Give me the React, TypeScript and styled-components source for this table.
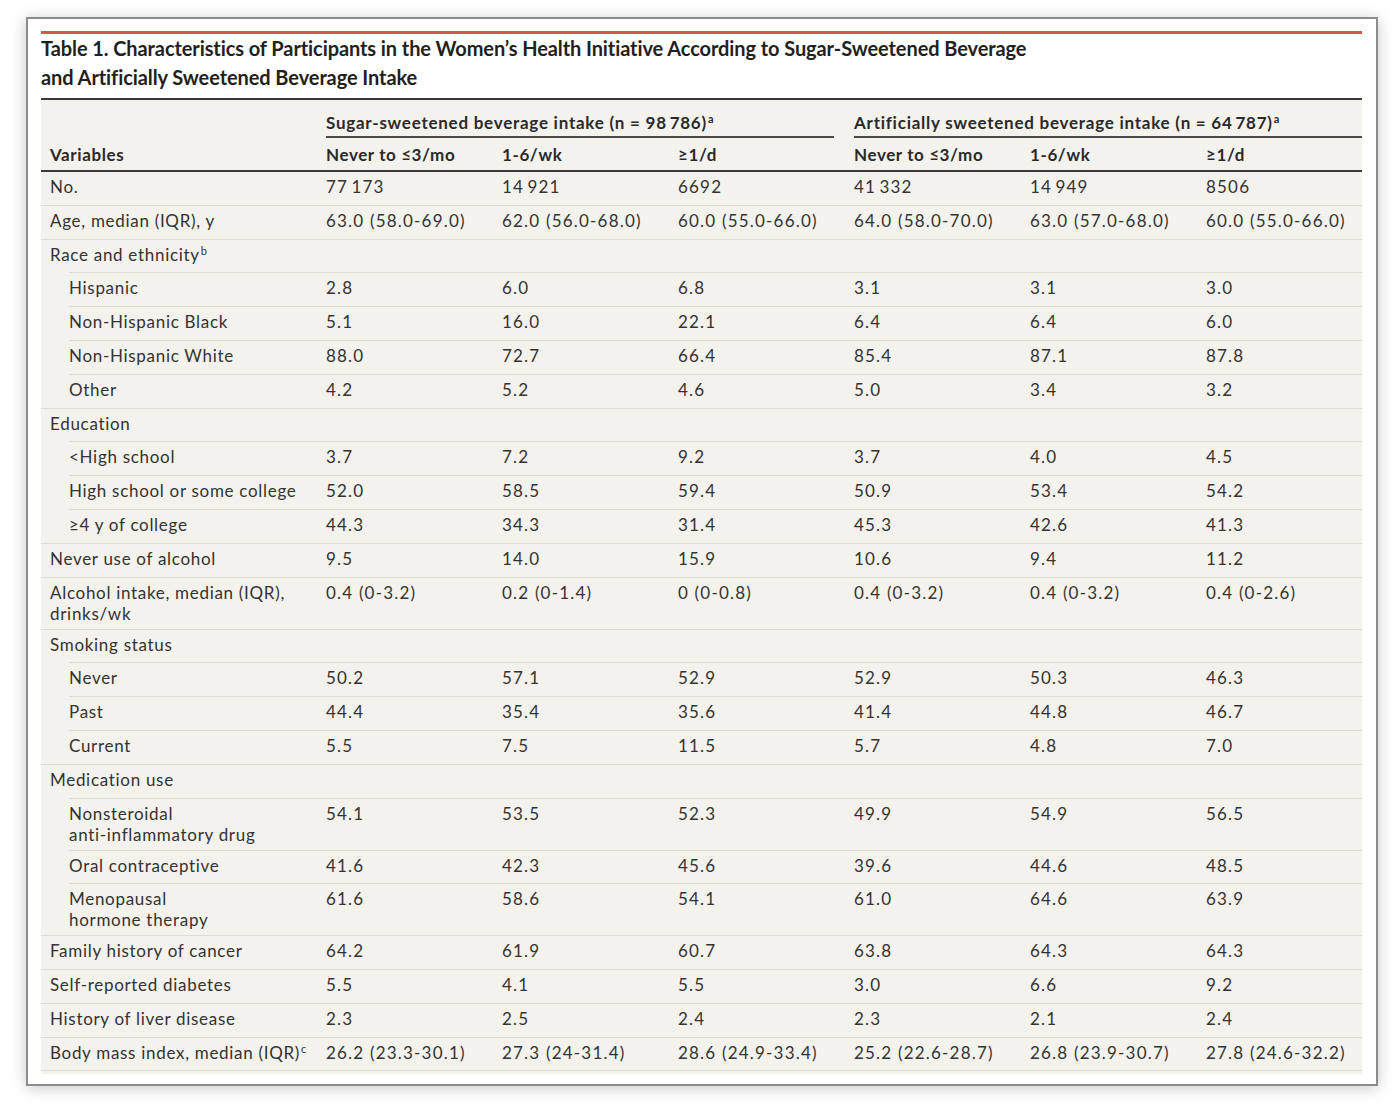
import React from "react";
import styled, { createGlobalStyle } from "styled-components";

const Global = createGlobalStyle`
  html, body { margin: 0; padding: 0; background: #ffffff; }
  body { font-family: Lato, "Noto Sans", sans-serif; color: #333; }
`;

const Page = styled.div`
  padding: 17px 0 20px 26px;
`;

const Card = styled.div`
  width: 1352px;
  box-sizing: border-box;
  border: 2px solid #8c8c8c;
  background: #fff;
  box-shadow: 0 2px 14px rgba(0, 0, 0, 0.22);
  padding: 12px 14px 10px 13px;
`;

const RedBar = styled.div`
  height: 3px;
  background: #d9534f;
`;

const Title = styled.h1`
  margin: 0 0 6px 0;
  font-family: Lato, "Noto Sans", sans-serif;
  font-weight: 700;
  font-size: 20px;
  line-height: 29px;
  color: #231f20;
  letter-spacing: -0.09px;
`;

const Table = styled.div`
  background: #f3f2ed;
  border-top: 2px solid #3a3a3a;
  padding-bottom: 3px;
`;

const COLS = "276px 176px 176px 176px 176px 176px 165px";

const GroupRow = styled.div`
  display: grid;
  grid-template-columns: ${COLS};
  padding-top: 12px;
`;

const GroupCell = styled.div<{ $start: number; $right: number }>`
  grid-column: ${(p) => p.$start} / span 3;
  padding: 0 ${(p) => p.$right}px 0 9px;
`;

const GroupLabel = styled.div`
  font-size: 17px;
  line-height: 21px;
  font-weight: 700;
  letter-spacing: 0.75px;
  color: #2a2a2a;
  padding-bottom: 3px;
  border-bottom: 2px solid #4a4a4a;
  white-space: nowrap;
`;

const HeadRow = styled.div`
  display: grid;
  grid-template-columns: ${COLS};
  padding: 6px 0 5px;
  border-bottom: 2px solid #3a3a3a;
`;

const HeadCell = styled.div`
  padding-left: 9px;
  font-size: 17px;
  line-height: 21px;
  font-weight: 700;
  letter-spacing: 0.6px;
  color: #2a2a2a;
  white-space: nowrap;
`;

const Row = styled.div<{ $sub?: boolean; $first?: boolean; $last?: boolean }>`
  display: grid;
  grid-template-columns: ${(p) => (p.$sub ? "248px 176px 176px 176px 176px 176px 165px" : COLS)};
  margin-left: ${(p) => (p.$sub ? 28 : 0)}px;
  border-top: ${(p) => (p.$first ? "none" : "1px solid #dcdbd4")};
  border-bottom: ${(p) => (p.$last ? "1px solid #dcdbd4" : "none")};
  box-sizing: border-box;
  min-height: ${(p) => (p.$first ? 32.8 : 33.8)}px;
  padding: 4px 0 5px;
`;

const Label = styled.div<{ $sub?: boolean }>`
  padding-left: ${(p) => (p.$sub ? 0 : 9)}px;
  font-size: 17px;
  line-height: 21px;
  letter-spacing: 0.7px;
  color: #333;
  white-space: nowrap;
`;

const Value = styled.div`
  padding-left: 9px;
  font-size: 17px;
  line-height: 21px;
  letter-spacing: 1.2px;
  color: #333;
  white-space: nowrap;
`;

const Sup = styled.sup`
  font-size: 11px;
  line-height: 0;
  vertical-align: 6px;
  margin-left: 1px;
  letter-spacing: 0;
`;

type RowData = {
  label: React.ReactNode;
  values?: string[];
  sub?: boolean;
};

const T = "\u2009";

const rows: RowData[] = [
  { label: "No.", values: [`77${T}173`, `14${T}921`, "6692", `41${T}332`, `14${T}949`, "8506"] },
  {
    label: "Age, median (IQR), y",
    values: ["63.0 (58.0-69.0)", "62.0 (56.0-68.0)", "60.0 (55.0-66.0)", "64.0 (58.0-70.0)", "63.0 (57.0-68.0)", "60.0 (55.0-66.0)"],
  },
  { label: <>Race and ethnicity<Sup>b</Sup></> },
  { label: "Hispanic", sub: true, values: ["2.8", "6.0", "6.8", "3.1", "3.1", "3.0"] },
  { label: "Non-Hispanic Black", sub: true, values: ["5.1", "16.0", "22.1", "6.4", "6.4", "6.0"] },
  { label: "Non-Hispanic White", sub: true, values: ["88.0", "72.7", "66.4", "85.4", "87.1", "87.8"] },
  { label: "Other", sub: true, values: ["4.2", "5.2", "4.6", "5.0", "3.4", "3.2"] },
  { label: "Education" },
  { label: "<High school", sub: true, values: ["3.7", "7.2", "9.2", "3.7", "4.0", "4.5"] },
  { label: "High school or some college", sub: true, values: ["52.0", "58.5", "59.4", "50.9", "53.4", "54.2"] },
  { label: "≥4 y of college", sub: true, values: ["44.3", "34.3", "31.4", "45.3", "42.6", "41.3"] },
  { label: "Never use of alcohol", values: ["9.5", "14.0", "15.9", "10.6", "9.4", "11.2"] },
  {
    label: <>Alcohol intake, median (IQR),<br />drinks/wk</>,
    values: ["0.4 (0-3.2)", "0.2 (0-1.4)", "0 (0-0.8)", "0.4 (0-3.2)", "0.4 (0-3.2)", "0.4 (0-2.6)"],
  },
  { label: "Smoking status" },
  { label: "Never", sub: true, values: ["50.2", "57.1", "52.9", "52.9", "50.3", "46.3"] },
  { label: "Past", sub: true, values: ["44.4", "35.4", "35.6", "41.4", "44.8", "46.7"] },
  { label: "Current", sub: true, values: ["5.5", "7.5", "11.5", "5.7", "4.8", "7.0"] },
  { label: "Medication use" },
  {
    label: <>Nonsteroidal<br />anti-inflammatory drug</>,
    sub: true,
    values: ["54.1", "53.5", "52.3", "49.9", "54.9", "56.5"],
  },
  { label: "Oral contraceptive", sub: true, values: ["41.6", "42.3", "45.6", "39.6", "44.6", "48.5"] },
  {
    label: <>Menopausal<br />hormone therapy</>,
    sub: true,
    values: ["61.6", "58.6", "54.1", "61.0", "64.6", "63.9"],
  },
  { label: "Family history of cancer", values: ["64.2", "61.9", "60.7", "63.8", "64.3", "64.3"] },
  { label: "Self-reported diabetes", values: ["5.5", "4.1", "5.5", "3.0", "6.6", "9.2"] },
  { label: "History of liver disease", values: ["2.3", "2.5", "2.4", "2.3", "2.1", "2.4"] },
  {
    label: <>Body mass index, median (IQR)<Sup>c</Sup></>,
    values: ["26.2 (23.3-30.1)", "27.3 (24-31.4)", "28.6 (24.9-33.4)", "25.2 (22.6-28.7)", "26.8 (23.9-30.7)", "27.8 (24.6-32.2)"],
  },
];

const heads = ["Never to ≤3/mo", "1-6/wk", "≥1/d", "Never to ≤3/mo", "1-6/wk", "≥1/d"];

export default function App() {
  return (
    <>
      <Global />
      <Page>
        <Card>
          <RedBar />
          <Title>
            Table 1. Characteristics of Participants in the Women’s Health Initiative According to Sugar-Sweetened Beverage
            <br />
            and Artificially Sweetened Beverage Intake
          </Title>
          <Table>
            <GroupRow>
              <GroupCell $start={2} $right={11}>
                <GroupLabel>
                  Sugar-sweetened beverage intake (n = 98{T}786)<Sup>a</Sup>
                </GroupLabel>
              </GroupCell>
              <GroupCell $start={5} $right={0}>
                <GroupLabel>
                  Artificially sweetened beverage intake (n = 64{T}787)<Sup>a</Sup>
                </GroupLabel>
              </GroupCell>
            </GroupRow>
            <HeadRow>
              <HeadCell>Variables</HeadCell>
              {heads.map((h, i) => (
                <HeadCell key={i}>{h}</HeadCell>
              ))}
            </HeadRow>
            {rows.map((r, i) => (
              <Row key={i} $sub={r.sub} $first={i === 0} $last={i === rows.length - 1}>
                <Label $sub={r.sub}>{r.label}</Label>
                {(r.values ?? ["", "", "", "", "", ""]).map((v, j) => (
                  <Value key={j}>{v}</Value>
                ))}
              </Row>
            ))}
          </Table>
        </Card>
      </Page>
    </>
  );
}
